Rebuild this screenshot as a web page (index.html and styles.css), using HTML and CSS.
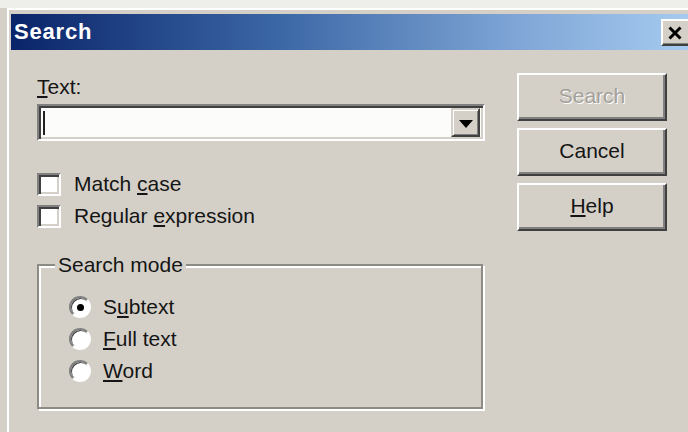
FILE: index.html
```html
<!DOCTYPE html>
<html lang="en">
<head>
<meta charset="utf-8">
<title>Search</title>
<link rel="stylesheet" href="styles.css">
</head>
<body>
<div class="desk"></div>
<div class="window">
  <div class="titlebar">
    <span class="title">Search</span>
    <button class="close" type="button" aria-label="Close">
      <svg width="14" height="14" viewBox="0 0 14 14"><path d="M1.5 1.5 L12.5 12.5 M12.5 1.5 L1.5 12.5" stroke="#000" stroke-width="3" fill="none"/></svg>
    </button>
  </div>
  <div class="client">
    <div class="main">
      <label class="label"><u>T</u>ext:</label>
      <div class="combo">
        <div class="field"><span class="caret"></span></div>
        <div class="drop"><span class="tri"></span></div>
      </div>
      <div class="checks">
        <div class="row"><span class="box"></span><span>Match <u>c</u>ase</span></div>
        <div class="row"><span class="box"></span><span>Regular <u>e</u>xpression</span></div>
      </div>
      <div class="group">
        <span class="legend">Search mode</span>
        <div class="row"><span class="radio on"></span><span>S<u>u</u>btext</span></div>
        <div class="row"><span class="radio"></span><span><u>F</u>ull text</span></div>
        <div class="row"><span class="radio"></span><span><u>W</u>ord</span></div>
      </div>
    </div>
    <div class="buttons">
      <div class="btn disabled">Search</div>
      <div class="btn">Cancel</div>
      <div class="btn"><span><u>H</u>elp</span></div>
    </div>
  </div>
</div>
</body>
</html>
```
FILE: styles.css
```css
* { box-sizing: border-box; }

html, body {
  margin: 0;
  width: 688px;
  height: 432px;
  overflow: hidden;
  background: #d4d0c8;
  font-family: "Liberation Sans", Arial, sans-serif;
  font-size: 21px;
  line-height: 24px;
  color: #151515;
}

u { text-decoration: underline; text-underline-offset: 2px; }

.desk {
  height: 8px;
  background: #eeeeeb;
}

.window {
  margin-left: 7px;
  height: 424px;
  border-left: 2px solid #fff;
  border-top: 2px solid #fff;
  padding: 4px 0 0 2px;
}

/* caption bar */
.titlebar {
  height: 36px;
  display: flex;
  align-items: flex-start;
  justify-content: space-between;
  background: linear-gradient(to right, #0a246a 0%, #3c68a6 40%, #7fa6d6 75%, #a6caf0 100%);
}

.title {
  padding-left: 3px;
  margin-top: 5px;
  font-weight: bold;
  font-size: 22px;
  letter-spacing: 0.8px;
  color: #fff;
  line-height: 26px;
}

.close {
  margin-top: 5px;
  margin-right: -6px;
  width: 33px;
  height: 27px;
  padding: 1px 6px 0 0;
  display: flex;
  align-items: center;
  justify-content: center;
  background: #d4d0c8;
  border: 2px solid;
  border-color: #fff #404040 #404040 #fff;
  box-shadow: inset -1px -1px 0 #808080;
}

/* dialog body */
.client {
  display: flex;
  padding: 25px 0 0 26px;
}

.main {
  width: 448px;
  display: flex;
  flex-direction: column;
}

.label { display: block; height: 24px; }

.combo {
  margin-top: 5px;
  height: 37px;
  display: flex;
  border: 2px solid;
  border-color: #808080 #fff #fff #808080;
  box-shadow: inset 2px 2px 0 #404040, inset -2px -2px 0 #d4d0c8;
  padding: 2px 3px 2px 2px;
  background: #fcfcfa;
}

.field {
  flex: 1;
  display: flex;
  align-items: center;
  padding-left: 2px;
}

.caret {
  width: 2px;
  height: 24px;
  background: #222;
}

.drop {
  width: 29px;
  border: 2px solid;
  border-color: #d4d0c8 #404040 #404040 #d4d0c8;
  box-shadow: inset 1px 1px 0 #fff, inset -1px -1px 0 #808080;
  background: #d4d0c8;
  display: flex;
  align-items: center;
  justify-content: center;
}

.tri {
  width: 0;
  height: 0;
  border-left: 7px solid transparent;
  border-right: 7px solid transparent;
  border-top: 8px solid #000;
  margin-top: 2px;
}

.checks { margin-top: 27px; }

.row {
  height: 32px;
  display: flex;
  align-items: center;
}

.box {
  width: 24px;
  height: 23px;
  margin-right: 13px;
  border: 2px solid;
  border-color: #808080 #fff #fff #808080;
  box-shadow: inset 2px 2px 0 #404040, inset -2px -2px 0 #d4d0c8;
  background: #fff;
}

/* etched group frame */
.group {
  position: relative;
  margin-top: 32px;
  height: 145px;
  width: 446px;
  border: 2px solid #8e8b85;
  box-shadow: inset 2px 2px 0 #fff, 2px 2px 0 #fff;
  padding: 25px 0 0 30px;
}

.legend {
  position: absolute;
  left: 16px;
  top: -13px;
  padding: 0 3px;
  background: #d4d0c8;
}

.radio {
  position: relative;
  width: 22px;
  height: 22px;
  margin-right: 12px;
  border-radius: 50%;
  border: 2px solid;
  border-color: #808080 #fff #fff #808080;
  box-shadow: inset 1px 1px 0 #404040;
  background: #fff;
}

.radio.on::after {
  content: "";
  position: absolute;
  left: 6px;
  top: 6px;
  width: 7px;
  height: 7px;
  border-radius: 50%;
  background: #000;
}

/* push buttons */
.buttons {
  margin-left: 32px;
  margin-top: -2px;
  display: flex;
  flex-direction: column;
  gap: 7px;
}

.btn {
  width: 150px;
  height: 48px;
  display: flex;
  align-items: center;
  justify-content: center;
  border: 2px solid;
  border-color: #fff #404040 #404040 #fff;
  box-shadow: inset -2px -2px 0 #808080;
  padding-bottom: 2px;
}

.btn.disabled {
  color: #a3a099;
  text-shadow: 1px 1px 0 #fff;
}
```
